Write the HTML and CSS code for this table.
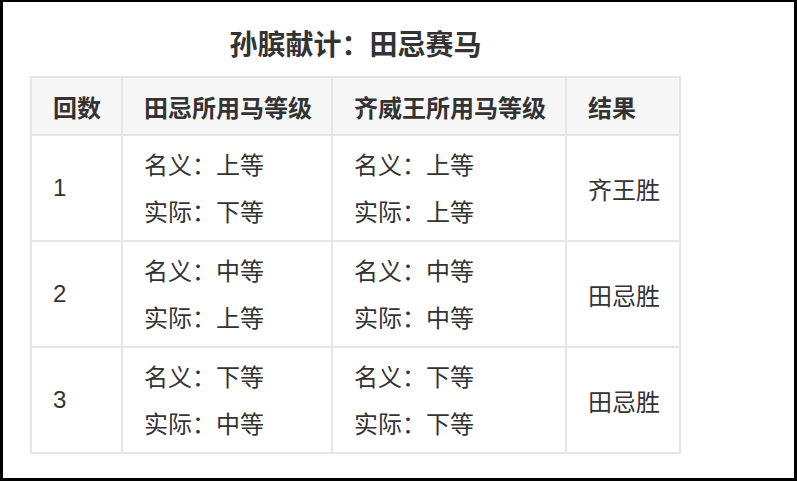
FILE: index.html
```html
<!DOCTYPE html>
<html lang="zh">
<head>
<meta charset="utf-8">
<link rel="stylesheet" href="styles.css">
</head>
<body>
<div class="frame">
  <table class="race">
    <caption class="title">孙膑献计：田忌赛马</caption>
    <colgroup>
      <col class="c1"><col class="c2"><col class="c3"><col class="c4">
    </colgroup>
    <thead>
      <tr class="head"><th>回数</th><th>田忌所用马等级</th><th>齐威王所用马等级</th><th>结果</th></tr>
    </thead>
    <tbody>
      <tr>
        <td class="num">1</td>
        <td><div class="lines"><span>名义：上等</span><span>实际：下等</span></div></td>
        <td><div class="lines"><span>名义：上等</span><span>实际：上等</span></div></td>
        <td>齐王胜</td>
      </tr>
      <tr>
        <td class="num">2</td>
        <td><div class="lines"><span>名义：中等</span><span>实际：上等</span></div></td>
        <td><div class="lines"><span>名义：中等</span><span>实际：中等</span></div></td>
        <td>田忌胜</td>
      </tr>
      <tr>
        <td class="num">3</td>
        <td><div class="lines"><span>名义：下等</span><span>实际：中等</span></div></td>
        <td><div class="lines"><span>名义：下等</span><span>实际：下等</span></div></td>
        <td>田忌胜</td>
      </tr>
    </tbody>
  </table>
</div>
</body>
</html>
```

FILE: styles.css
```css
html, body {
  margin: 0;
  padding: 0;
  background: #ffffff;
}
.frame {
  box-sizing: border-box;
  width: 797px;
  height: 481px;
  border-style: solid;
  border-color: #000;
  border-width: 2px 3px 3px 3px;
  padding: 0 0 0 27px;
  font-family: "Liberation Sans", "Noto Sans CJK SC", sans-serif;
  color: #333333;
}
.race {
  border-collapse: collapse;
  table-layout: fixed;
  width: 651px;
}
.title {
  font-size: 28px;
  font-weight: bold;
  line-height: 36px;
  padding: 26px 0 12px 0;
  text-align: center;
  color: #333333;
}
.c1 { width: 91px; }
.c2 { width: 210px; }
.c3 { width: 234px; }
.c4 { width: 114px; }
.race th, .race td {
  border: 2px solid #e6e6e6;
  text-align: left;
  padding: 0 0 0 21px;
  font-size: 24px;
  vertical-align: middle;
}
.head th {
  background: #f7f7f7;
  height: 56px;
  font-weight: bold;
}
.race td {
  height: 104px;
  font-weight: normal;
}
.race td.num {
  font-size: 24px;
}
.lines {
  display: flex;
  flex-direction: column;
  gap: 17px;
  line-height: 30px;
  padding-top: 3px;
}
```
